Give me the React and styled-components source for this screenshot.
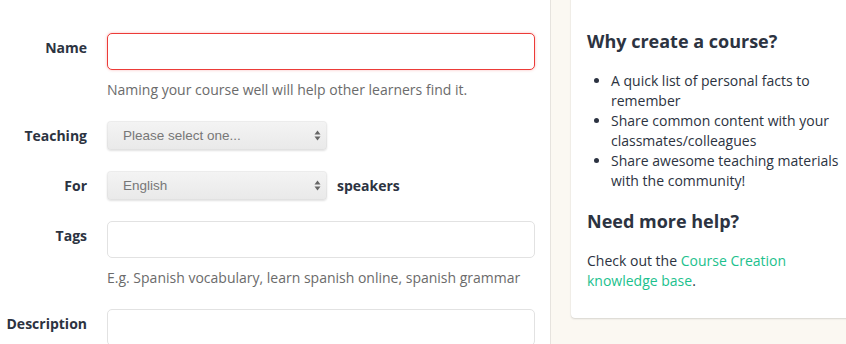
import React from "react";
import styled, { createGlobalStyle } from "styled-components";

const Global = createGlobalStyle`
  html, body { margin: 0; padding: 0; background: #fff; overflow: hidden; }
  body { font-family: "Open Sans", "Noto Sans", sans-serif; color: #2c3341; }
  * { box-sizing: border-box; }
`;

const Page = styled.div`
  display: flex;
  width: 846px;
  height: 344px;
  overflow: hidden;
`;

const FormColumn = styled.div`
  width: 551px;
  flex: none;
  border-right: 1px solid #e6e3de;
  padding-top: 33px;
  padding-right: 15px;
`;

const Sidebar = styled.div`
  flex: 1;
  min-width: 0;
  background: #fbf8f2;
  padding-left: 20px;
`;

const Card = styled.div`
  width: 290px;
  margin-top: -20px;
  background: #fff;
  border-radius: 4px;
  box-shadow: 0 1px 2px rgba(0, 0, 0, 0.14), 0 0 1px rgba(0, 0, 0, 0.1);
  padding: 49px 16px 27px 16px;
`;

const Group = styled.div`
  display: grid;
  grid-template-columns: 87px 1fr;
  column-gap: 20px;
  margin-bottom: ${(p) => p.$mb ?? 21}px;
`;

const Label = styled.label`
  text-align: right;
  font-weight: 700;
  font-size: 14px;
  line-height: 20px;
  padding-top: 5px;
  color: #2c3341;
`;

const Field = styled.div`
  display: flex;
  flex-direction: column;
`;

const Input = styled.div`
  height: 37px;
  width: 428px;
  border-radius: 5px;
  background: #fff;
  border: 1px solid ${(p) => (p.$error ? "#ec3b38" : "#e2e2e2")};
  box-shadow: ${(p) => (p.$error ? "0 0 3px rgba(236, 59, 56, 0.35)" : "none")};
`;

const Help = styled.div`
  margin-top: 10px;
  font-size: 14px;
  line-height: 20px;
  color: #6b6b6b;
`;

const SelectRow = styled.div`
  display: flex;
  align-items: center;
  gap: 10px;
`;

const Select = styled.div`
  position: relative;
  width: 220px;
  height: 29px;
  border-radius: 4px;
  background: linear-gradient(#f4f4f4, #e9e9e9);
  box-shadow: 0 1px 2px rgba(0, 0, 0, 0.12), inset 0 0 0 1px rgba(0, 0, 0, 0.03);
  font-family: "Liberation Sans", Arial, sans-serif;
  font-size: 13.5px;
  color: #777;
  display: flex;
  align-items: center;
  padding-left: 16px;
`;

const Arrows = styled.svg`
  position: absolute;
  right: 6px;
  top: 9px;
`;

const Suffix = styled.span`
  font-weight: 700;
  font-size: 14px;
  color: #2c3341;
`;

const Heading = styled.h3`
  margin: 0 0 18px 0;
  font-size: 18px;
  line-height: 24px;
  font-weight: 700;
  color: #2c3341;
`;

const List = styled.ul`
  margin: 0 0 18px 0;
  padding-left: 24px;
  font-size: 14px;
  line-height: 20px;
`;

const Text = styled.p`
  margin: 0;
  font-size: 14px;
  line-height: 20px;
  width: 220px;
`;

const Link = styled.a`
  color: #1cc18d;
  text-decoration: none;
`;

const SelectBox = ({ children }) => (
  <Select>
    {children}
    <Arrows width="7" height="11" viewBox="0 0 7 11">
      <path d="M3.5 0.5 L6.5 4.5 L0.5 4.5 Z" fill="#666" />
      <path d="M3.5 10.5 L6.5 6.5 L0.5 6.5 Z" fill="#666" />
    </Arrows>
  </Select>
);

export default function App() {
  return (
    <>
      <Global />
      <Page>
        <FormColumn>
          <Group>
            <Label>Name</Label>
            <Field>
              <Input $error />
              <Help>Naming your course well will help other learners find it.</Help>
            </Field>
          </Group>
          <Group>
            <Label>Teaching</Label>
            <Field>
              <SelectRow>
                <SelectBox>Please select one...</SelectBox>
              </SelectRow>
            </Field>
          </Group>
          <Group>
            <Label>For</Label>
            <Field>
              <SelectRow>
                <SelectBox>English</SelectBox>
                <Suffix>speakers</Suffix>
              </SelectRow>
            </Field>
          </Group>
          <Group>
            <Label>Tags</Label>
            <Field>
              <Input />
              <Help>E.g. Spanish vocabulary, learn spanish online, spanish grammar</Help>
            </Field>
          </Group>
          <Group>
            <Label>Description</Label>
            <Field>
              <Input />
            </Field>
          </Group>
        </FormColumn>
        <Sidebar>
          <Card>
            <Heading>Why create a course?</Heading>
            <List>
              <li>A quick list of personal facts to remember</li>
              <li>Share common content with your classmates/colleagues</li>
              <li>Share awesome teaching materials with the community!</li>
            </List>
            <Heading>Need more help?</Heading>
            <Text>
              Check out the <Link href="#">Course Creation knowledge base</Link>.
            </Text>
          </Card>
        </Sidebar>
      </Page>
    </>
  );
}
